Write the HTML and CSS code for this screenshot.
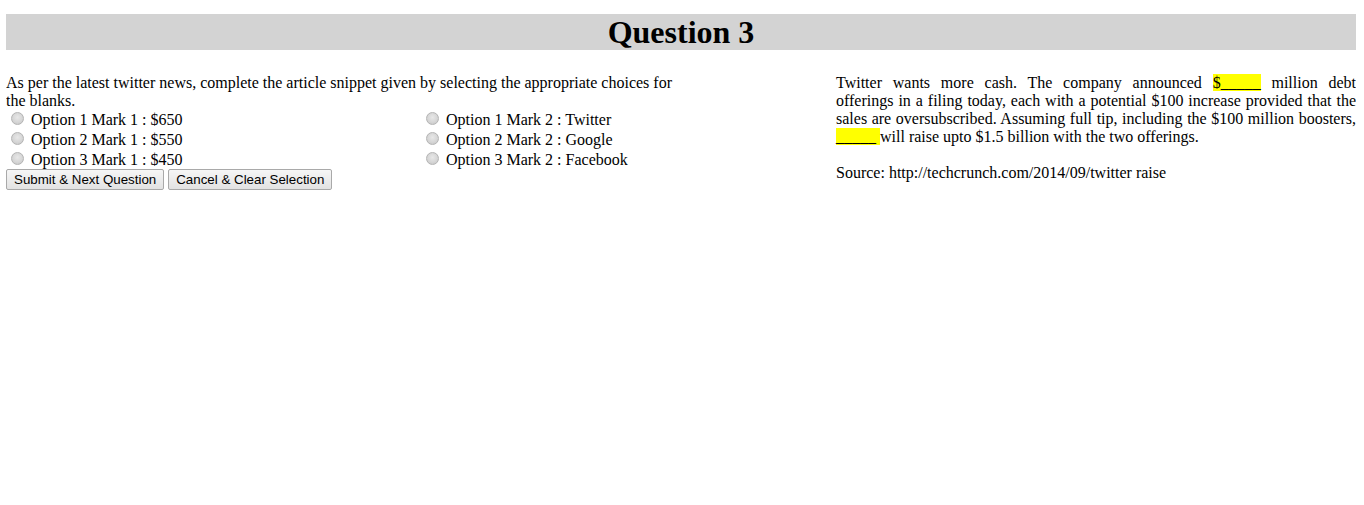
FILE: index.html
```html
<!DOCTYPE html>
<html>
<head>
<meta charset="utf-8">
<title>Question 3</title>
<link rel="stylesheet" href="styles.css">
</head>
<body>
<h1 class="title">Question 3</h1>
<div class="content">
  <div class="left">
    <p class="prompt">As per the latest twitter news, complete the article snippet given by selecting the appropriate choices for the blanks.</p>
    <div class="options">
      <div class="opt-col">
        <label class="opt"><input type="radio" name="m1">Option 1 Mark 1 : $650</label>
        <label class="opt"><input type="radio" name="m1">Option 2 Mark 1 : $550</label>
        <label class="opt"><input type="radio" name="m1">Option 3 Mark 1 : $450</label>
      </div>
      <div class="opt-col">
        <label class="opt"><input type="radio" name="m2">Option 1 Mark 2 : Twitter</label>
        <label class="opt"><input type="radio" name="m2">Option 2 Mark 2 : Google</label>
        <label class="opt"><input type="radio" name="m2">Option 3 Mark 2 : Facebook</label>
      </div>
    </div>
    <div class="actions">
      <button class="btn">Submit &amp; Next Question</button>
      <button class="btn">Cancel &amp; Clear Selection</button>
    </div>
  </div>
  <div class="right">
    <p class="article">Twitter wants more cash. The company announced <span class="blank">$_____</span> million debt offerings in a filing today, each with a potential $100 increase provided that the sales are oversubscribed. Assuming full tip, including the $100 million boosters, <span class="blank">_____&nbsp;</span>will raise upto $1.5 billion with the two offerings.</p>
    <p class="source">Source: http://techcrunch.com/2014/09/twitter raise</p>
  </div>
</div>
</body>
</html>
```
FILE: styles.css
```css
html, body {
  background: #fff;
}
body {
  margin: 14px 8px 0 6px;
  font-family: "Liberation Serif", "Times New Roman", serif;
  font-size: 16px;
  color: #000;
}
.title {
  margin: 0;
  background: #d3d3d3;
  text-align: center;
  font-size: 32px;
  font-weight: bold;
  line-height: 36px;
  height: 36px;
}
.content {
  display: flex;
  justify-content: space-between;
  margin-top: 24px;
}
.left {
  width: 830px;
}
.prompt {
  margin: 0;
  width: 685px;
  line-height: 18px;
}
.options {
  display: flex;
}
.opt-col {
  flex: 0 0 415px;
  display: flex;
  flex-direction: column;
}
.opt {
  display: block;
  height: 20px;
  line-height: 20px;
}
.opt input {
  -webkit-appearance: none;
  appearance: none;
  box-sizing: border-box;
  display: inline-block;
  margin: 0 7px 0 5px;
  width: 13px;
  height: 13px;
  border-radius: 50%;
  border: 1px solid #b4b4b4;
  background: radial-gradient(circle at 50% 40%, #e8e8e8 0%, #d6d6d6 55%, #c4c4c4 100%);
  vertical-align: 0px;
}
.actions {
  display: flex;
  gap: 4px;
  margin-top: -1px;
}
.btn {
  font-family: "Liberation Sans", Arial, sans-serif;
  font-size: 13.33px;
  height: 21px;
  padding: 0 7px;
  border: 1px solid #a9a9a9;
  border-radius: 2px;
  background: linear-gradient(#f6f6f6, #e2e2e2);
  color: #000;
  line-height: 19px;
}
.right {
  width: 520px;
}
.article {
  margin: 0;
  line-height: 18px;
  text-align: justify;
}
.blank {
  background: #ffff00;
}
.source {
  margin: 18px 0 0;
  line-height: 18px;
}
```
